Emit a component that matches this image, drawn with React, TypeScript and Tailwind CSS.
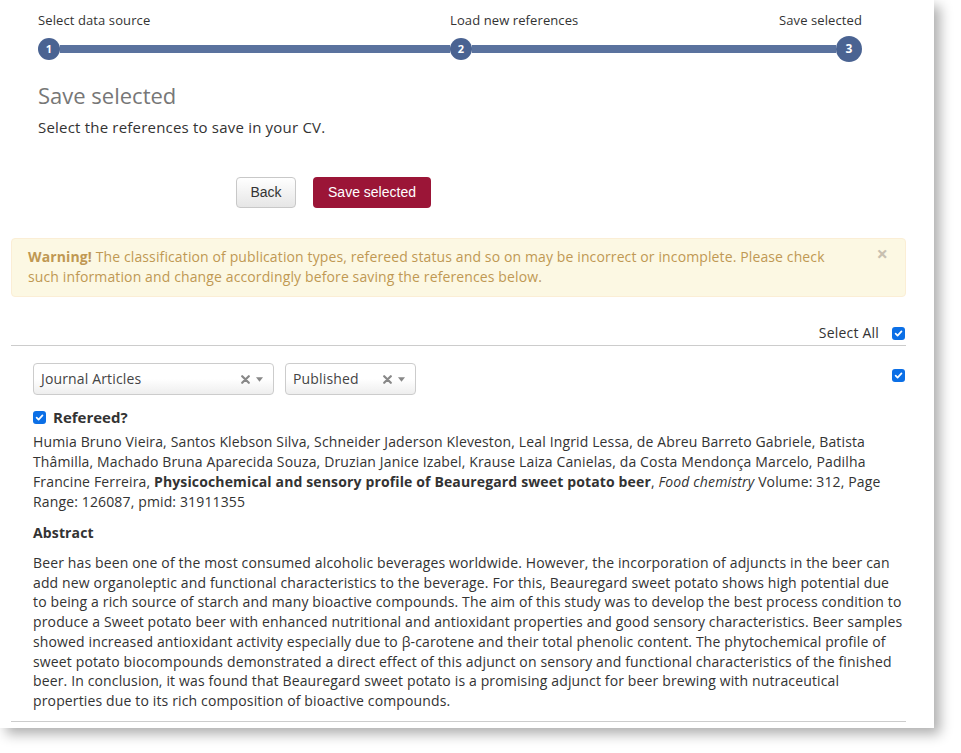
import React from "react";

const Check = () => (
  <span className="inline-flex h-[13px] w-[13px] items-center justify-center rounded-[3px] bg-[#0b6fe6]">
    <svg width="9" height="9" viewBox="0 0 10 10">
      <path d="M1.8 5.2 L4 7.4 L8.3 2.6" fill="none" stroke="white" strokeWidth="1.9" strokeLinecap="round" strokeLinejoin="round" />
    </svg>
  </span>
);

const SelectBox = ({ label, width }: { label: string; width: string }) => (
  <div
    className={`flex h-[32px] ${width} items-center rounded-[4px] border border-[#cccccc] bg-gradient-to-b from-white from-50% to-[#eeeeee] pl-[7px] pr-[10px] text-[14px] tracking-[0.15px] text-[#444]`}
  >
    <span className="flex-1">{label}</span>
    <svg width="9" height="9" viewBox="0 0 9 9" className="mr-[6px]">
      <path d="M1.2 1.2 L7.8 7.8 M7.8 1.2 L1.2 7.8" stroke="#888" strokeWidth="2.2" strokeLinecap="round" />
    </svg>
    <svg width="7" height="5" viewBox="0 0 8 5">
      <path d="M0 0 L8 0 L4 5 Z" fill="#888" />
    </svg>
  </div>
);

export default function App() {
  return (
    <div className="h-[753px] w-[961px] bg-white" style={{ fontFamily: '"Open Sans", sans-serif' }}>
      <div className="w-[934px] bg-white pb-[6px] shadow-[6px_6px_12px_rgba(0,0,0,0.32)]">
        {/* stepper */}
        <div className="px-[38px] pt-[11px]">
          <div className="flex w-[824px] text-[13px] leading-[18px] tracking-[0.1px] text-[#333]">
            <span className="w-[412px]">Select data source</span>
            <span>Load new references</span>
            <span className="flex-1 text-right">Save selected</span>
          </div>
          <div className="mt-[7px] flex h-[26px] w-[824px] items-center">
            <div className="flex h-[22px] w-[22px] items-center justify-center rounded-full bg-[#4a6392] text-[11px] font-bold text-white">1</div>
            <div className="h-[8px] w-[390px] bg-[#5a729e]" />
            <div className="flex h-[22px] w-[22px] items-center justify-center rounded-full bg-[#4a6392] text-[11px] font-bold text-white">2</div>
            <div className="h-[8px] flex-1 bg-[#5a729e]" />
            <div className="flex h-[26px] w-[26px] items-center justify-center rounded-full bg-[#4a6392] text-[12px] font-bold text-white">3</div>
          </div>
          <h2 className="mt-[19px] text-[22px] leading-[28px] text-[#777]">Save selected</h2>
          <p className="mt-[8px] text-[15px] leading-[20px] tracking-[0.2px] text-[#333]">Select the references to save in your CV.</p>
        </div>

        {/* buttons */}
        <div className="mt-[40px] flex gap-[17px] pl-[236px]" style={{ fontFamily: '"Liberation Sans", Arial, sans-serif' }}>
          <button className="h-[31px] w-[60px] rounded-[4px] border border-[#c8c8c8] bg-gradient-to-b from-white to-[#e6e6e6] text-[14px] text-[#333]">
            Back
          </button>
          <button className="h-[31px] w-[118px] rounded-[4px] bg-[#9b1537] text-[14px] text-white">Save selected</button>
        </div>

        {/* alert */}
        <div className="mx-[11px] mt-[30px] flex h-[59px] w-[895px] rounded-[4px] border border-[#fbeed5] bg-[#fcf8e3] pl-[16px] pr-[17px] pt-[8px] text-[14px] leading-[20px] tracking-[0.12px] text-[#c09853]">
          <p className="w-[815px]">
            <b>Warning!</b> The classification of publication types, refereed status and so on may be incorrect or incomplete. Please check such information and change accordingly before saving the references below.
          </p>
          <span className="ml-auto mt-[-3px] text-[20px] font-bold leading-[20px] text-[#c8c0b0]">×</span>
        </div>

        {/* select all */}
        <div className="mt-[26px] flex w-[906px] items-center justify-end gap-[13px] text-[14px] leading-[20px] tracking-[0.2px] text-[#333]">
          <span>Select All</span>
          <span className="mr-px flex"><Check /></span>
        </div>
        <div className="ml-[11px] mt-[2px] h-px w-[895px] bg-[#cccccc]" />

        {/* item */}
        <div className="ml-[33px] w-[873px] pt-[17px] text-[14px] leading-[20px] tracking-[0.14px] text-[#333]">
          <div className="flex items-start">
            <div className="flex gap-[11px]">
              <SelectBox label="Journal Articles" width="w-[241px]" />
              <SelectBox label="Published" width="w-[131px]" />
            </div>
            <span className="ml-auto mt-[6px] mr-px flex"><Check /></span>
          </div>
          <div className="mt-[12px] flex items-center gap-[7px]">
            <Check />
            <span className="text-[15px] font-bold tracking-normal">Refereed?</span>
          </div>
          <p className="mt-[5px] w-[860px]">
            Humia Bruno Vieira, Santos Klebson Silva, Schneider Jaderson Kleveston, Leal Ingrid Lessa, de Abreu Barreto Gabriele, Batista Thâmilla, Machado Bruna Aparecida Souza, Druzian Janice Izabel, Krause Laiza Canielas, da Costa Mendonça Marcelo, Padilha Francine Ferreira, <b>Physicochemical and sensory profile of Beauregard sweet potato beer</b>, <i>Food chemistry</i> Volume: 312, Page Range: 126087, pmid: 31911355
          </p>
          <h4 className="mt-[11px] font-bold">Abstract</h4>
          <p className="mt-[10px] leading-[19.7px]">
            Beer has been one of the most consumed alcoholic beverages worldwide. However, the incorporation of adjuncts in the beer can add new organoleptic and functional characteristics to the beverage. For this, Beauregard sweet potato shows high potential due to being a rich source of starch and many bioactive compounds. The aim of this study was to develop the best process condition to produce a Sweet potato beer with enhanced nutritional and antioxidant properties and good sensory characteristics. Beer samples showed increased antioxidant activity especially due to β-carotene and their total phenolic content. The phytochemical profile of sweet potato biocompounds demonstrated a direct effect of this adjunct on sensory and functional characteristics of the finished beer. In conclusion, it was found that Beauregard sweet potato is a promising adjunct for beer brewing with nutraceutical properties due to its rich composition of bioactive compounds.
          </p>
        </div>
        <div className="ml-[11px] mt-[10px] h-px w-[895px] bg-[#cccccc]" />
      </div>
    </div>
  );
}
